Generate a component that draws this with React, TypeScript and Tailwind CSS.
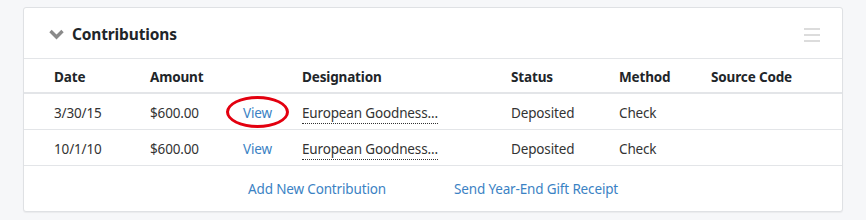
import type { ReactNode } from "react";

type Gift = {
  date: string;
  amount: string;
  designation: string;
  status: string;
  method: string;
  source: string;
  circled?: boolean;
};

const gifts: Gift[] = [
  { date: "3/30/15", amount: "$600.00", designation: "European Goodness...", status: "Deposited", method: "Check", source: "", circled: true },
  { date: "10/1/10", amount: "$600.00", designation: "European Goodness...", status: "Deposited", method: "Check", source: "" },
];

function Th({ children, w }: { children?: ReactNode; w: string }) {
  return <th className={`${w} p-0 pt-[4px] text-left font-bold text-[#212529]`}>{children}</th>;
}

export default function App() {
  return (
    <div
      className="w-[866px] h-[220px] bg-[#f6f7f9] pt-[7px] pl-[23px] text-[13.5px] tracking-[-0.15px] text-[#333]"
      style={{ fontFamily: '"Noto Sans", "Open Sans", sans-serif' }}
    >
      <div className="w-[820px] h-[205px] bg-white border border-[#dfe1e4] rounded-[3px] shadow-[0_1px_1px_rgba(0,0,0,0.05)]">
        {/* header */}
        <div className="h-[51px] flex items-center pt-[3px] pl-[25px] pr-[22px] border-b border-[#e3e5e8]">
          <svg width="15" height="11" viewBox="0 0 15 11" className="mr-[8px]">
            <path d="M1.5 2 L7.5 8 L13.5 2" fill="none" stroke="#8a8a8a" strokeWidth="3.4" strokeLinecap="butt" />
          </svg>
          <span className="text-[15.5px] font-bold text-[#212529]">Contributions</span>
          <div className="ml-auto flex flex-col gap-[4px] w-[16px]">
            <span className="h-[2px] bg-[#dcdcdc]" />
            <span className="h-[2px] bg-[#dcdcdc]" />
            <span className="h-[2px] bg-[#dcdcdc]" />
          </div>
        </div>

        <table className="w-full border-collapse table-fixed">
          <thead>
            <tr className="h-[34px] border-b-2 border-[#e3e5e8]">
              <Th w="w-[126px] pl-[30px]">Date</Th>
              <Th w="w-[93px]">Amount</Th>
              <Th w="w-[59px]" />
              <Th w="w-[209px]">Designation</Th>
              <Th w="w-[108px]">Status</Th>
              <Th w="w-[92px]">Method</Th>
              <Th w="">Source Code</Th>
            </tr>
          </thead>
          <tbody>
            {gifts.map((g, i) => (
              <tr key={i} className="h-[36px] border-b border-[#e3e5e8] [&>td]:pt-[4px]">
                <td className="pl-[30px]">{g.date}</td>
                <td>{g.amount}</td>
                <td>
                  <span className="relative inline-block text-[#3b82c4]">
                    View
                    {g.circled && (
                      <span className="absolute -left-[17px] -top-[7px] w-[63px] h-[32px] rounded-[50%] border-[3.5px] border-[#e3000f]" />
                    )}
                  </span>
                </td>
                <td>
                  <span className="border-b border-dotted border-[#333] pb-[1px]">{g.designation}</span>
                </td>
                <td>{g.status}</td>
                <td>{g.method}</td>
                <td>{g.source}</td>
              </tr>
            ))}
          </tbody>
        </table>

        <div className="h-[44px] flex items-center pt-[4px] pl-[224px] gap-[68px] text-[#3b82c4]">
          <span>Add New Contribution</span>
          <span>Send Year-End Gift Receipt</span>
        </div>
      </div>
    </div>
  );
}
